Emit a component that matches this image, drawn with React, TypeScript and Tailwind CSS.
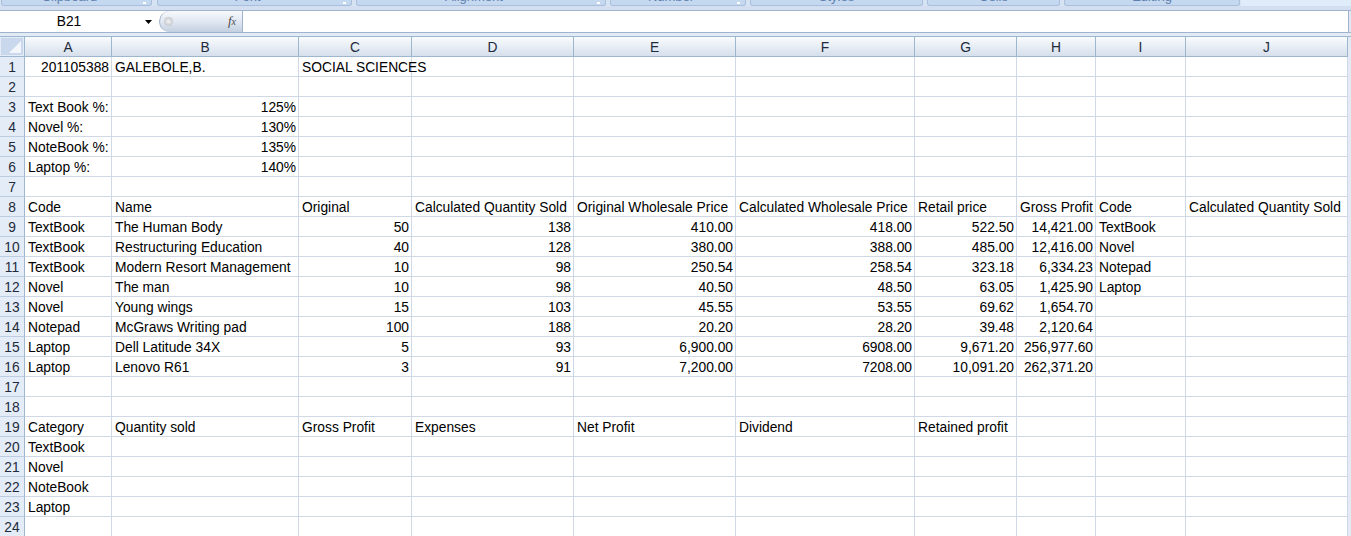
import React from "react";

const COLS = [87, 187, 113, 162, 162, 179, 102, 79, 90, 162];
const LETTERS = ["A", "B", "C", "D", "E", "F", "G", "H", "I", "J"];

const ROWS: string[][] = [
  ["201105388", "GALEBOLE,B.", "SOCIAL SCIENCES"],
  [],
  ["Text Book %:", "125%"],
  ["Novel %:", "130%"],
  ["NoteBook %:", "135%"],
  ["Laptop %:", "140%"],
  [],
  ["Code", "Name", "Original", "Calculated Quantity Sold", "Original Wholesale Price", "Calculated Wholesale Price", "Retail price", "Gross Profit", "Code", "Calculated Quantity Sold"],
  ["TextBook", "The Human Body", "50", "138", "410.00", "418.00", "522.50", "14,421.00", "TextBook"],
  ["TextBook", "Restructuring Education", "40", "128", "380.00", "388.00", "485.00", "12,416.00", "Novel"],
  ["TextBook", "Modern Resort Management", "10", "98", "250.54", "258.54", "323.18", "6,334.23", "Notepad"],
  ["Novel", "The man", "10", "98", "40.50", "48.50", "63.05", "1,425.90", "Laptop"],
  ["Novel", "Young wings", "15", "103", "45.55", "53.55", "69.62", "1,654.70"],
  ["Notepad", "McGraws Writing pad", "100", "188", "20.20", "28.20", "39.48", "2,120.64"],
  ["Laptop", "Dell Latitude 34X", "5", "93", "6,900.00", "6908.00", "9,671.20", "256,977.60"],
  ["Laptop", "Lenovo R61", "3", "91", "7,200.00", "7208.00", "10,091.20", "262,371.20"],
  [],
  [],
  ["Category", "Quantity sold", "Gross Profit", "Expenses", "Net Profit", "Dividend", "Retained profit"],
  ["TextBook"],
  ["Novel"],
  ["NoteBook"],
  ["Laptop"],
  [],
];

const GROUPS = [
  { label: "Clipboard", w: "w-[151px]", ml: "ml-[1px]", launcher: true },
  { label: "Font", w: "w-[195px]", ml: "ml-[5px]", launcher: true },
  { label: "Alignment", w: "w-[250px]", ml: "ml-[4px]", launcher: true },
  { label: "Number", w: "w-[136px]", ml: "ml-[4px]", launcher: true },
  { label: "Styles", w: "w-[173px]", ml: "ml-[4px]", launcher: false },
  { label: "Cells", w: "w-[133px]", ml: "ml-[4px]", launcher: false },
  { label: "Editing", w: "w-[176px]", ml: "ml-[4px]", launcher: false },
];

const isNum = (s: string) => /^[\d,.%]+$/.test(s);

function Ribbon() {
  return (
    <div className="flex h-[6px] bg-[#d6e3f3]">
      {GROUPS.map((g) => (
        <div
          key={g.label}
          className={`${g.w} ${g.ml} relative h-[6px] overflow-hidden rounded-b-[3px] border-x border-b border-[#a9bfdc] bg-[#c4d8f0]`}
        >
          <div className={`-mt-[10px] text-center text-[13px] leading-[14px] text-[#5f80ad] ${g.launcher ? "pr-[14px]" : ""}`}>
            {g.label}
          </div>
          {g.launcher && <div className="absolute right-[5px] bottom-[1px] h-[2px] w-[3px] bg-white" />}
        </div>
      ))}
      <div className="ml-[1px] flex-1 bg-[#dfedfb]" />
    </div>
  );
}

function FormulaBar() {
  return (
    <div className="flex flex-col">
      <div className="h-[4px] bg-[#d3dff0]" />
      <div className="flex h-[23px] border-y border-[#9fb3cd] bg-white">
        <div className="flex w-[159px] items-start">
          <div className="w-[138px] pt-[3px] text-center text-[13.8px] leading-[16px] text-black">B21</div>
          <svg width="7" height="4" viewBox="0 0 7 4" className="mt-[9px] ml-[7px]">
            <polygon points="0,0 7,0 3.5,4" fill="#000" />
          </svg>
        </div>
        <div className="flex w-[83px] items-center justify-between rounded-l-full border-l border-[#9fb0c8] bg-linear-to-b from-[#f7f9fc] via-[#e1e8f2] to-[#c3cfe0] pr-[6px] pl-[4px]">
          <div className="h-[9px] w-[9px] rounded-full bg-radial from-[#f4f4f4] to-[#b3b8bf]" />
          <span className="font-['Liberation_Serif',serif] text-[13px] leading-[16px] text-[#4a4a4a] italic">
            f<span className="text-[10px]">x</span>
          </span>
        </div>
        <div className="w-[1107px] border-x border-[#9fb3cd] bg-white" />
        <div className="flex-1 bg-[#dfe8f4]" />
      </div>
      <div className="h-[3px] bg-[#e2eaf5]" />
    </div>
  );
}

function Corner() {
  return (
    <div className="flex h-[20px] w-[25px] items-center justify-center border-r border-b border-[#9eb6ce] bg-[#e4ecf7]">
      <svg width="22" height="17" viewBox="0 0 22 17">
        <rect x="0" y="0" width="22" height="17" fill="#c9d8ec" />
        <polygon points="20,3 20,15 8,15" fill="#f3f6fb" />
      </svg>
    </div>
  );
}

export default function App() {
  return (
    <div className="h-[536px] w-full overflow-hidden bg-[#e3eaf3] font-['Liberation_Sans',Arial,sans-serif] text-[13.8px] text-black">
      <Ribbon />
      <FormulaBar />
      <div className="h-[1px] w-full bg-[#9eb6ce]" />
      <div className="grid w-[1348px] grid-cols-[25px_87px_187px_113px_162px_162px_179px_102px_79px_90px_162px] bg-white">
        <Corner />
        {LETTERS.map((l) => (
          <div
            key={l}
            className="h-[20px] border-r border-b border-[#9eb6ce] bg-linear-to-b from-[#f9fcfd] to-[#d6dfec] pt-[3px] text-center leading-[16px] text-[#1e2b3c]"
          >
            {l}
          </div>
        ))}
        {ROWS.map((row, r) => (
          <React.Fragment key={r}>
            <div className="h-[20px] border-r border-b border-r-[#9eb6ce] border-b-[#bccde2] bg-[#e4ecf7] pt-[3px] text-center leading-[16px] text-[#1e2b3c]">
              {r + 1}
            </div>
            {COLS.map((_, c) => {
              const v = row[c] ?? "";
              return (
                <div
                  key={c}
                  className={`h-[20px] border-r border-b border-[#d0d7e5] pt-[3px] leading-[16px] whitespace-nowrap ${
                    isNum(v) ? "pr-[2px] text-right" : "pl-[3px] text-left"
                  }`}
                >
                  {v}
                </div>
              );
            })}
          </React.Fragment>
        ))}
      </div>
    </div>
  );
}
